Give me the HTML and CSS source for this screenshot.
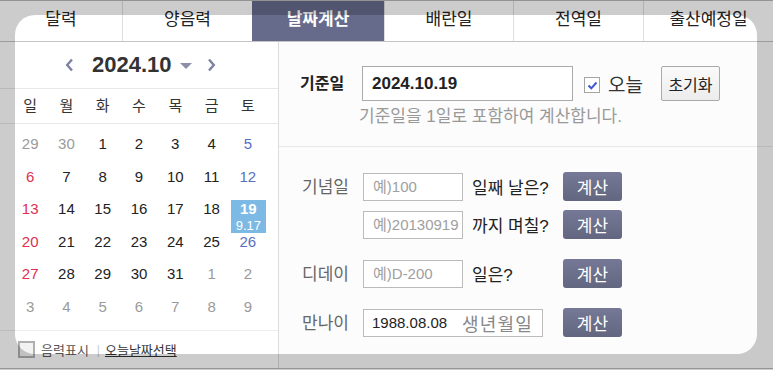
FILE: index.html
```html
<!DOCTYPE html>
<html lang="ko">

<head>
    <meta charset="UTF-8">
    <meta name="viewport" content="width=device-width, initial-scale=1.0">
    <title>날짜계산</title>
    <link rel="stylesheet" href="styles.css">
</head>

<body>
    <ul class="tabs">
        <li>달력</li>
        <li>양음력</li>
        <li class="active">날짜계산</li>
        <li>배란일</li>
        <li>전역일</li>
        <li>출산예정일</li>
    </ul>

    <div class="main">
        <!-- 달력 -->
        <div class="cal">
            <div class="cal-head">
                <svg class="arrow" width="9" height="14" viewBox="0 0 9 14"><path d="M7 1.5 L2.2 7 L7 12.5" /></svg>
                <span class="cal-title">2024.10</span>
                <span class="caret"></span>
                <svg class="arrow next" width="9" height="14" viewBox="0 0 9 14"><path d="M2 1.5 L6.8 7 L2 12.5" /></svg>
            </div>
            <div class="weekdays">
                <span>일</span><span>월</span><span>화</span><span>수</span><span>목</span><span>금</span><span>토</span>
            </div>
            <div class="days">
                <span class="o">29</span><span class="o">30</span><span>1</span><span>2</span><span>3</span><span>4</span><span class="sat">5</span>
                <span class="sun">6</span><span>7</span><span>8</span><span>9</span><span>10</span><span>11</span><span class="sat">12</span>
                <span class="sun">13</span><span>14</span><span>15</span><span>16</span><span>17</span><span>18</span><span class="today">19<small>9.17</small></span>
                <span class="sun">20</span><span>21</span><span>22</span><span>23</span><span>24</span><span>25</span><span class="sat">26</span>
                <span class="sun">27</span><span>28</span><span>29</span><span>30</span><span>31</span><span class="o">1</span><span class="o">2</span>
                <span class="o">3</span><span class="o">4</span><span class="o">5</span><span class="o">6</span><span class="o">7</span><span class="o">8</span><span class="o">9</span>
            </div>
            <div class="cal-foot">
                <span class="box"></span>
                <span class="lunar">음력표시</span>
                <span class="bar">|</span>
                <a class="today-link">오늘날짜선택</a>
            </div>
        </div>

        <!-- 계산 -->
        <div class="form">
            <div class="base">
                <div class="base-row">
                    <span class="base-label">기준일</span>
                    <input class="base-input" type="text" value="2024.10.19">
                    <span class="check"><svg width="13" height="13" viewBox="0 0 13 13"><path d="M2.5 6.5 L5.3 9.3 L10.5 3.5" /></svg></span>
                    <span class="today-text">오늘</span>
                    <button class="reset">초기화</button>
                </div>
                <p class="hint">기준일을 1일로 포함하여 계산합니다.</p>
            </div>

            <div class="rows">
                <div class="row">
                    <span class="label">기념일</span>
                    <input class="field" type="text" placeholder="예)100">
                    <span class="suffix">일째 날은?</span>
                    <button class="calc">계산</button>
                </div>
                <div class="row second">
                    <span class="label"></span>
                    <input class="field" type="text" placeholder="예)20130919">
                    <span class="suffix">까지 며칠?</span>
                    <button class="calc">계산</button>
                </div>
                <div class="row">
                    <span class="label">디데이</span>
                    <input class="field" type="text" placeholder="예)D-200">
                    <span class="suffix">일은?</span>
                    <button class="calc">계산</button>
                </div>
                <div class="row">
                    <span class="label">만나이</span>
                    <div class="birth">
                        <input type="text" value="1988.08.08">
                        <span>생년월일</span>
                    </div>
                    <button class="calc">계산</button>
                </div>
            </div>
        </div>
    </div>

    <!-- 강조 영역 -->
    <div class="spot"></div>
</body>

</html>
```

FILE: styles.css
```css
* {
    margin: 0;
    padding: 0;
    box-sizing: border-box;
}

body {
    position: relative;
    width: 773px;
    height: 370px;
    overflow: hidden;
    background-color: #fff;
    color: #222;
    font-family: "Liberation Sans", "Noto Sans CJK KR", sans-serif;
}

/* tabs */
.tabs {
    display: grid;
    grid-template-columns: 122px 130px 132px 129px 130px 130px;
    height: 42px;
    list-style: none;
    border-top: 1px solid #b8b8b8;
    border-bottom: 1px solid #c4c4c4;
}

.tabs li {
    font-size: 17px;
    line-height: 38px;
    text-align: center;
    color: #222;
    border-left: 1px solid #dedede;
}

.tabs li:first-child {
    border-left: none;
}

.tabs li.active {
    background-color: #666b8b;
    color: #fff;
    font-weight: bold;
    border-left: none;
}

.main {
    display: flex;
    height: 327px;
    border-bottom: 1px solid #bcbcbc;
}

/* calendar */
.cal {
    width: 279px;
    display: flex;
    flex-direction: column;
    border-right: 1px solid #dcdcdc;
}

.cal-head {
    display: flex;
    align-items: center;
    height: 47px;
    padding-left: 65px;
    border-bottom: 1px solid #e8e8e8;
}

.arrow path {
    fill: none;
    stroke: #7d82a0;
    stroke-width: 2.4;
}

.cal-title {
    margin-left: 18px;
    font-size: 22px;
    font-weight: bold;
    color: #333;
}

.caret {
    width: 0;
    height: 0;
    margin-left: 8px;
    margin-top: 2px;
    border-left: 6px solid transparent;
    border-right: 6px solid transparent;
    border-top: 6px solid #8b8fa8;
}

.arrow.next {
    margin-left: 15px;
}

.weekdays {
    display: grid;
    grid-template-columns: repeat(7, 1fr);
    height: 35px;
    padding: 0 12px;
    border-bottom: 1px solid #e8e8e8;
    font-size: 15px;
    line-height: 34px;
    text-align: center;
    color: #333;
}

.days {
    display: grid;
    grid-template-columns: repeat(7, 1fr);
    grid-template-rows: repeat(6, 32.5px);
    height: 207px;
    padding: 11px 12px 0;
    border-bottom: 1px solid #ececec;
}

.days span {
    font-size: 15px;
    line-height: 18px;
    text-align: center;
    color: #222;
}

.days .o {
    color: #9a9a9a;
}

.days .sun {
    color: #e0304f;
}

.days .sat {
    color: #5870c4;
}

.days .today {
    display: flex;
    flex-direction: column;
    align-items: center;
    background-color: #7cb9e4;
    color: #fff;
    font-weight: bold;
    margin-left: 1px;
}

.days .today small {
    font-size: 13px;
    font-weight: normal;
    line-height: 15px;
}

.cal-foot {
    flex: 1;
    display: flex;
    align-items: center;
    padding-left: 18px;
    font-size: 13px;
}

.box {
    width: 17px;
    height: 17px;
    border: 2px solid #b0b0b0;
    background-color: #f2f2f2;
}

.lunar {
    margin-left: 6px;
    color: #555;
}

.bar {
    margin: 0 5px 0 8px;
    color: #ccc;
    font-size: 12px;
}

.today-link {
    color: #333;
    text-decoration: underline;
}

/* form */
.form {
    flex: 1;
    background-color: #fcfcfc;
}

.base {
    height: 105px;
    padding: 24px 0 0 21px;
    border-bottom: 1px solid #e8e8e8;
}

.base-row {
    display: flex;
    align-items: center;
    height: 35px;
}

.base-label {
    width: 62px;
    font-size: 16px;
    font-weight: bold;
    color: #222;
    margin-top: -4px;
}

.base-input {
    width: 211px;
    height: 35px;
    padding-left: 9px;
    border: 1px solid #aaa;
    background-color: #fff;
    font-family: "Liberation Sans", sans-serif;
    font-size: 17px;
    font-weight: bold;
    color: #222;
    outline: none;
}

.check {
    display: flex;
    align-items: center;
    justify-content: center;
    width: 16px;
    height: 16px;
    margin-left: 11px;
    margin-top: 3px;
    border: 1px solid #a5a5a5;
    background-color: #fff;
}

.check path {
    fill: none;
    stroke: #3d57d6;
    stroke-width: 2;
}

.today-text {
    margin-left: 8px;
    font-size: 19px;
    color: #333;
}

.reset {
    width: 59px;
    height: 35px;
    margin-left: 18px;
    border: 1px solid #aaa;
    border-radius: 2px;
    background: linear-gradient(#fafafa, #ececec);
    font-family: "Noto Sans CJK KR", sans-serif;
    font-size: 16px;
    color: #222;
}

.hint {
    margin: 5px 0 0 59px;
    font-size: 17px;
    line-height: 22px;
    color: #999;
}

.rows {
    padding: 25px 0 0 23px;
}

.row {
    display: flex;
    align-items: center;
    height: 29px;
    margin-bottom: 20px;
}

.row:first-child {
    margin-bottom: 9px;
}

.label {
    width: 61px;
    font-size: 17px;
    color: #666;
    margin-top: -3px;
}

.field {
    width: 100px;
    height: 28px;
    padding-left: 9px;
    border: 1px solid #bbb;
    background-color: #fff;
    font-family: "Liberation Sans", "Noto Sans CJK KR", sans-serif;
    font-size: 15px;
    color: #222;
    outline: none;
}

.field::placeholder {
    color: #a0a0a0;
}

.suffix {
    width: 100px;
    padding-left: 9px;
    font-size: 17px;
    color: #222;
}

.calc {
    width: 59px;
    height: 29px;
    border: none;
    border-radius: 3px;
    background: linear-gradient(#757997, #62667f);
    font-family: "Noto Sans CJK KR", sans-serif;
    font-size: 17px;
    color: #fff;
}

.birth {
    display: flex;
    align-items: center;
    width: 180px;
    height: 28px;
    margin-right: 20px;
    border: 1px solid #bbb;
    background-color: #fff;
}

.birth input {
    width: 98px;
    padding-left: 8px;
    border: none;
    background: transparent;
    font-family: "Liberation Sans", sans-serif;
    font-size: 15px;
    color: #222;
    outline: none;
}

.birth span {
    font-size: 18px;
    letter-spacing: 1.2px;
    color: #888;
}

/* highlight cut-out over the page */
.spot {
    position: absolute;
    left: 15px;
    top: 15px;
    width: 742px;
    height: 339px;
    border-radius: 20px;
    box-shadow: 0 0 0 800px rgba(0, 0, 0, 0.2);
    pointer-events: none;
}
```
